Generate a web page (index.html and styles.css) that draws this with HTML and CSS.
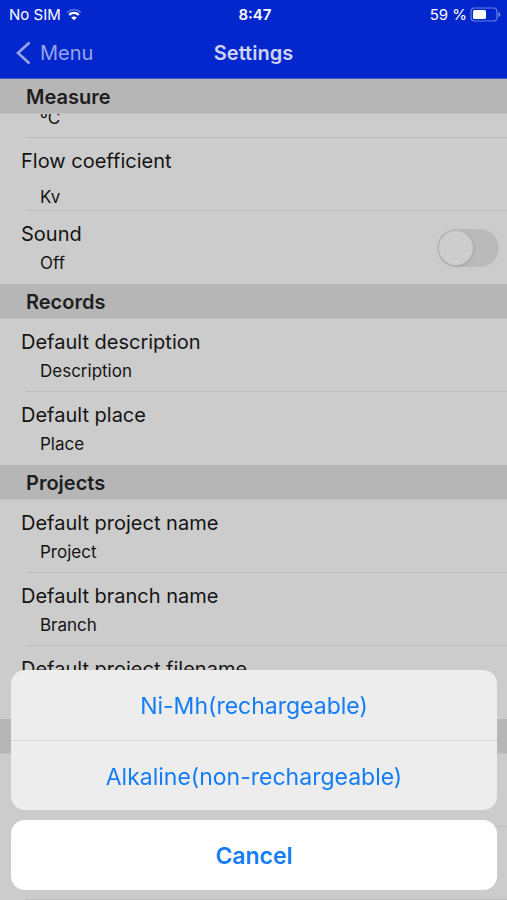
FILE: index.html
```html
<!DOCTYPE html>
<html lang="en">
<head>
<meta charset="utf-8">
<meta name="viewport" content="width=device-width, initial-scale=1">
<title>Settings</title>
<link rel="stylesheet" href="styles.css">
</head>
<body>
<div class="screen">
  <header class="header">
    <div class="status">
      <span class="carrier">No SIM
        <svg class="wifi" width="16" height="13" viewBox="0 0 18 14" aria-hidden="true">
          <path d="M1.2 4.8a11.2 11.2 0 0 1 15.6 0" fill="none" stroke="#fff" stroke-opacity=".3" stroke-width="2"/>
          <path d="M3.6 7.6a7.4 7.4 0 0 1 10.8 0" fill="none" stroke="#fff" stroke-width="2.6"/>
          <path d="M9 13.6 5.8 10.5a4.4 4.4 0 0 1 6.4 0z" fill="#fff"/>
        </svg>
      </span>
      <span class="clock">8:47</span>
      <span class="power">59 %
        <svg class="battery" width="31" height="15" viewBox="0 0 31 15" aria-hidden="true">
          <rect x="1" y="1" width="26" height="13" rx="3.5" fill="none" stroke="#fff" stroke-opacity=".4" stroke-width="1.2"/>
          <rect x="3" y="3" width="13" height="9" rx="1.5" fill="#fff"/>
          <path d="M28.5 5v5c1.1-.4 1.8-1.4 1.8-2.500S29.600 5.400 28.500 5z" fill="#fff" fill-opacity=".5"/>
        </svg>
      </span>
    </div>
    <nav class="nav">
      <a class="back" href="#menu">
        <svg width="15" height="24" viewBox="0 0 15 24" aria-hidden="true">
          <path d="M13.500 1.500 2 12l11.500 10.500" fill="none" stroke="currentColor" stroke-width="2.600"/>
        </svg>
        Menu
      </a>
      <h1 class="title">Settings</h1>
    </nav>
  </header>
  <main class="settings">
    <h2 class="section">Measure</h2>
    <div class="scroller">
      <ul class="list">
        <li class="row partial"><span class="value">ºC</span></li>
        <li class="row loose"><span class="name">Flow coefficient</span><span class="value">Kv</span></li>
        <li class="row with-switch">
          <label class="text" for="sound"><span class="name">Sound</span><span class="value">Off</span></label>
          <input class="switch" type="checkbox" id="sound">
        </li>
      </ul>
      <h2 class="section">Records</h2>
      <ul class="list">
        <li class="row"><span class="name">Default description</span><span class="value">Description</span></li>
        <li class="row"><span class="name">Default place</span><span class="value">Place</span></li>
      </ul>
      <h2 class="section">Projects</h2>
      <ul class="list">
        <li class="row"><span class="name">Default project name</span><span class="value">Project</span></li>
        <li class="row"><span class="name">Default branch name</span><span class="value">Branch</span></li>
        <li class="row"><span class="name">Default project filename</span></li>
      </ul>
      <h2 class="section"></h2>
      <ul class="list">
        <li class="row"></li>
        <li class="row"></li>
        <li class="row"></li>
      </ul>
    </div>
  </main>
  <div class="sheet" role="dialog" aria-label="Battery type">
    <div class="options">
      <button class="action" type="button">Ni-Mh(rechargeable)</button>
      <button class="action" type="button">Alkaline(non-rechargeable)</button>
    </div>
    <button class="action cancel" type="button">Cancel</button>
  </div>
</div>
</body>
</html>
```
FILE: styles.css
```css
* {
  box-sizing: border-box;
}

body {
  margin: 0;
  background: #cccccc;
  color: #141414;
  font-family: Inter, "Liberation Sans", sans-serif;
}

.screen {
  display: flex;
  flex-direction: column;
  height: 100vh;
  overflow: hidden;
}

.header {
  flex: none;
  background: #0427cd;
  color: #fff;
  border-bottom: 1px solid #3f5cc8;
}

.status,
.nav {
  display: grid;
  grid-template-columns: 1fr auto 1fr;
  align-items: center;
}

.status {
  height: 28px;
  padding: 0 6px 0 9px;
  font-size: 15px;
}

.carrier,
.power {
  display: flex;
  align-items: center;
  gap: 5px;
}

.power {
  justify-content: flex-end;
  gap: 3px;
}

.clock {
  font-weight: 600;
}

.nav {
  height: 50px;
  padding: 0 16px;
}

.back {
  display: flex;
  align-items: center;
  gap: 9px;
  color: #97a5e6;
  font-size: 20px;
  text-decoration: none;
}

.title {
  margin: 0;
  color: #ced4f3;
  font-size: 20px;
  font-weight: 600;
}

.settings {
  display: flex;
  flex: 1;
  flex-direction: column;
  min-height: 0;
}

.scroller {
  flex: 1;
  min-height: 0;
  overflow: hidden;
}

.section {
  height: 35px;
  margin: 0;
  padding-left: 26px;
  background: #b6b6b6;
  border-bottom: 1px solid #c2c2c2;
  color: #1e1e1e;
  font-size: 20px;
  font-weight: 600;
  line-height: 37px;
}

.list {
  margin: 0;
  padding: 0;
  list-style: none;
}

.row {
  display: flex;
  flex-direction: column;
  height: 73px;
  padding: 8px 0 0 21px;
  background: linear-gradient(#bdbdbd, #bdbdbd) 25px 100% / 100% 1px no-repeat;
}

.row:last-child {
  background: none;
}

.name {
  font-size: 20px;
  line-height: 30px;
}

.value {
  padding-left: 19px;
  font-size: 17px;
  line-height: 29px;
}

.partial {
  justify-content: flex-end;
  height: 24px;
  padding: 0 0 5px 21px;
}

.loose {
  gap: 7px;
}

.with-switch {
  flex-direction: row;
  align-items: flex-start;
  justify-content: space-between;
  padding-right: 8px;
}

.text {
  display: flex;
  flex-direction: column;
}

.switch {
  width: 62px;
  height: 38px;
  margin: 10px 0 0;
  padding: 2px;
  appearance: none;
  background: #bababa;
  border-radius: 19px;
}

.switch::before {
  display: block;
  width: 34px;
  height: 34px;
  background: #cdcdcd;
  border-radius: 50%;
  box-shadow: 1px 1px 3px #a6a6a6;
  content: "";
}

.switch:checked::before {
  margin-left: auto;
}

.sheet {
  position: fixed;
  right: 10px;
  bottom: 10px;
  left: 11px;
  display: flex;
  flex-direction: column;
  gap: 10px;
}

.options {
  overflow: hidden;
  background: #ededed;
  border-radius: 14px;
}

.action {
  display: block;
  width: 100%;
  height: 70px;
  padding: 2px 0 0;
  background: none;
  border: 0;
  color: #147df5;
  font-family: inherit;
  font-size: 23px;
}

.action + .action {
  border-top: 1px solid #d6d6d6;
}

.cancel {
  background: #fff;
  border-radius: 14px;
  font-weight: 600;
}
```
